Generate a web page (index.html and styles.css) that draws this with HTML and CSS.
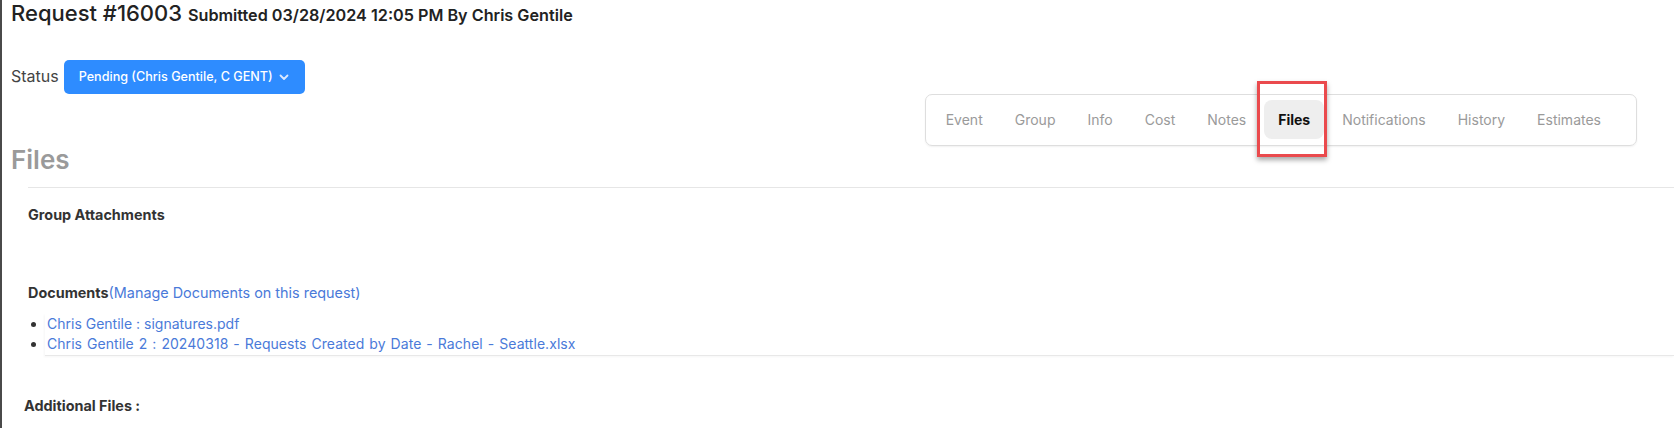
FILE: index.html
```html
<!DOCTYPE html>
<html lang="en">
<head>
<meta charset="utf-8">
<title>Request #16003</title>
<link rel="stylesheet" href="styles.css">
</head>
<body>
<div class="page">
  <h1 class="title">Request #16003 <span class="submitted">Submitted 03/28/2024 12:05 PM By Chris Gentile</span></h1>

  <div class="status-row">
    <span class="status-label">Status</span>
    <button class="status-btn" type="button">
      <span class="status-text">Pending (Chris Gentile, C GENT)</span>
      <svg class="chev" width="10" height="7" viewBox="0 0 10 7" aria-hidden="true"><path d="M1.5 1.5 L5 5 L8.5 1.5" fill="none" stroke="#dce9ff" stroke-width="1.8" stroke-linecap="round" stroke-linejoin="round"/></svg>
    </button>
  </div>

  <div class="tabs-row">
    <nav class="tabs">
      <a class="tab">Event</a>
      <a class="tab">Group</a>
      <a class="tab">Info</a>
      <a class="tab">Cost</a>
      <a class="tab">Notes</a>
      <a class="tab active">Files</a>
      <a class="tab">Notifications</a>
      <a class="tab">History</a>
      <a class="tab">Estimates</a>
    </nav>
  </div>

  <h2 class="section-title">Files</h2>
  <div class="rule"></div>

  <div class="content">
    <h3 class="label">Group Attachments</h3>

    <div class="docs-head">
      <span class="label-inline">Documents</span><a class="link manage">(Manage Documents on this request)</a>
    </div>
    <ul class="doc-list">
      <li><a class="link">Chris Gentile : signatures.pdf</a></li>
      <li><a class="link wide">Chris Gentile 2 : 20240318 - Requests Created by Date - Rachel - Seattle.xlsx</a></li>
    </ul>
  </div>

  <h3 class="additional">Additional Files :</h3>
</div>
</body>
</html>
```

FILE: styles.css
```css
* { box-sizing: border-box; }

html, body {
  margin: 0;
  padding: 0;
  background: #ffffff;
}

body {
  font-family: Inter, "Noto Sans", "Liberation Sans", sans-serif;
  color: #333333;
}

.page {
  border-left: 2px solid #4a4a4a;
  min-height: 428px;
  overflow: hidden;
}

.title {
  margin: 0;
  padding-left: 9px;
  font-size: 22px;
  line-height: 27px;
  height: 27px;
  font-weight: 500;
  color: #222222;
}

.submitted {
  font-size: 16.2px;
  line-height: 16px;
  font-weight: 600;
  color: #222222;
}

.status-row {
  display: flex;
  align-items: center;
  gap: 5px;
  height: 34px;
  margin-top: 33px;
  padding-left: 9px;
}

.status-label {
  font-size: 16px;
  line-height: 20px;
  color: #444444;
  position: relative;
  top: -1px;
}

.status-btn {
  display: flex;
  align-items: center;
  justify-content: space-between;
  width: 241px;
  height: 34px;
  padding: 0 16px 0 15px;
  border: none;
  border-radius: 5px;
  background: #2e8cff;
  color: #ffffff;
  font-family: Inter, "Noto Sans", sans-serif;
  font-size: 12.6px;
  font-weight: 500;
}

.status-text { line-height: 16px; }

.chev { display: block; margin-top: 1px; }

.tabs-row {
  display: flex;
  justify-content: flex-end;
  padding-right: 37px;
}

.tabs {
  display: flex;
  gap: 4px;
  padding: 5px 21px 6px 6px;
  border: 1px solid #dedede;
  border-radius: 7px;
  box-shadow: 0 1px 2px rgba(0, 0, 0, 0.06);
}

.tab {
  position: relative;
  padding: 11px 14px;
  font-size: 14px;
  line-height: 17px;
  color: #9a9a9a;
  border-radius: 8px;
}

.tab.active {
  background: #eeeeee;
  color: #111111;
  font-weight: 700;
}

.tab.active::after {
  content: "";
  position: absolute;
  left: -7px;
  right: -3px;
  top: -19px;
  bottom: -18px;
  border: 3px solid #ea4a4d;
  box-shadow: 0 3px 5px rgba(0, 0, 0, 0.35);
}

.section-title {
  margin: 1px 0 14px;
  padding-left: 9px;
  font-size: 26px;
  line-height: 26px;
  font-weight: 600;
  color: #9a9a9a;
}

.rule {
  margin-left: 26px;
  border-top: 1px solid #e6e6e6;
}

.content {
  padding-left: 26px;
}

.label {
  margin: 18px 0 0;
  font-size: 14.4px;
  line-height: 17px;
  font-weight: 700;
  color: #333333;
}

.docs-head {
  margin-top: 61px;
  font-size: 14px;
  line-height: 17px;
}

.label-inline {
  font-weight: 700;
  font-size: 14.4px;
  color: #333333;
}

.link {
  color: #4a7ad9;
  font-size: 14px;
}

.link.manage {
  font-size: 14.4px;
}

.link.wide {
  word-spacing: 1px;
  letter-spacing: 0.05px;
}

.doc-list {
  margin: 13px 0 0 17px;
  padding: 0 0 1px 2px;
  list-style: disc;
  list-style-position: outside;
  border-bottom: 1px solid #e8e8e8;
  box-shadow: -1px 1px 2px rgba(0, 0, 0, 0.04);
  font-size: 14px;
  line-height: 20px;
  color: #333333;
}

.doc-list li::marker {
  color: #333333;
}

.additional {
  margin: 41px 0 0;
  padding-left: 22px;
  font-size: 14.4px;
  line-height: 17px;
  font-weight: 700;
  color: #333333;
}
```
